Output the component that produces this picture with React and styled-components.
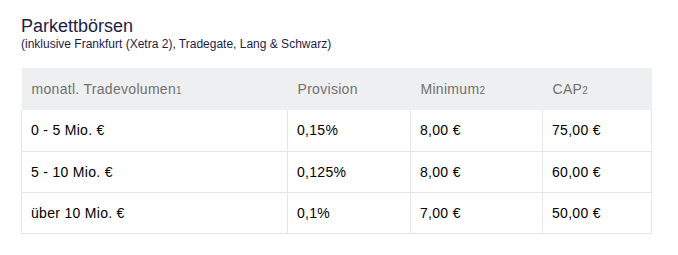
import React from 'react';
import styled, { createGlobalStyle } from 'styled-components';

// #region styles
const GlobalStyle = createGlobalStyle`
  body {
    margin: 0;
    background: #fff;
    font-family: "Liberation Sans", Arial, Helvetica, sans-serif;
  }
`;

const Page = styled.div`
  padding: 15px 27px 0 21px;
`;

const Title = styled.h2`
  margin: 0;
  font-size: 18px;
  line-height: 22px;
  font-weight: normal;
  color: #1d1d45;
`;

const Subtitle = styled.p`
  margin: 0;
  font-size: 12px;
  line-height: 15px;
  color: #1d1d45;
`;

const Table = styled.table`
  margin-top: 16px;
  width: 630px;
  border-collapse: collapse;
  table-layout: fixed;
  font-size: 14px;
  letter-spacing: 0.3px;
`;

const HeadRow = styled.tr`
  height: 42px;
  background: #eeeff0;
`;

const Th = styled.th`
  padding: 0 10px;
  text-align: left;
  font-weight: normal;
  color: #727070;
`;

const Row = styled.tr`
  height: 41px;
`;

const Td = styled.td`
  padding: 0 9px;
  border: 1px solid #e6e6e6;
  border-top: none;
  color: #000;
`;

const Note = styled.span`
  font-size: 10px;
  letter-spacing: 0;
`;
// #endregion

const rows = [
  ['0 - 5 Mio. €', '0,15%', '8,00 €', '75,00 €'],
  ['5 - 10 Mio. €', '0,125%', '8,00 €', '60,00 €'],
  ['über 10 Mio. €', '0,1%', '7,00 €', '50,00 €']
];

const App = () => (
  <Page>
    <GlobalStyle />
    <Title>Parkettbörsen</Title>
    <Subtitle>(inklusive Frankfurt (Xetra 2), Tradegate, Lang &amp; Schwarz)</Subtitle>
    <Table>
      <colgroup>
        <col style={{ width: 266 }} />
        <col style={{ width: 123 }} />
        <col style={{ width: 132 }} />
        <col style={{ width: 109 }} />
      </colgroup>
      <thead>
        <HeadRow>
          <Th>
            monatl. Tradevolumen<Note>1</Note>
          </Th>
          <Th>Provision</Th>
          <Th>
            Minimum<Note>2</Note>
          </Th>
          <Th>
            CAP<Note>2</Note>
          </Th>
        </HeadRow>
      </thead>
      <tbody>
        {rows.map(row => (
          <Row key={row[0]}>
            {row.map((cell, i) => (
              <Td key={i}>{cell}</Td>
            ))}
          </Row>
        ))}
      </tbody>
    </Table>
  </Page>
);

export default App;
